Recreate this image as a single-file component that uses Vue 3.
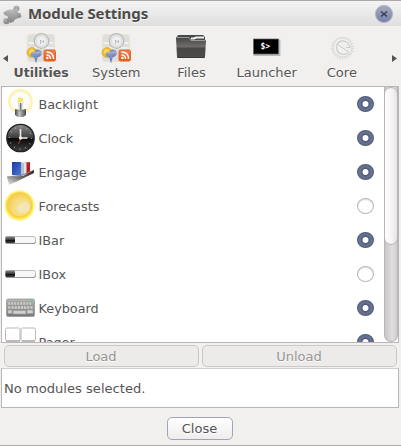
<script setup>
const tabs = [
  { name: 'Utilities', icon: 'utilities', active: true },
  { name: 'System', icon: 'utilities' },
  { name: 'Files', icon: 'files' },
  { name: 'Launcher', icon: 'launcher' },
  { name: 'Core', icon: 'core' },
]
const modules = [
  { name: 'Backlight', icon: 'bulb', on: true },
  { name: 'Clock', icon: 'clock', on: true },
  { name: 'Engage', icon: 'engage', on: true },
  { name: 'Forecasts', icon: 'sun', on: false },
  { name: 'IBar', icon: 'bar', on: true },
  { name: 'IBox', icon: 'bar', on: false },
  { name: 'Keyboard', icon: 'keyboard', on: true },
  { name: 'Pager', icon: 'pager', on: true },
]
const keys = [0, 1, 2, 3, 4, 5, 6, 7]
</script>

<template>
  <div class="window">
    <svg class="defs" width="0" height="0">
      <defs>
        <linearGradient id="puzzle" x1="0" y1="0" x2="0" y2="1"><stop offset="0" stop-color="#bdbdbd" /><stop offset="1" stop-color="#858585" /></linearGradient>
        <linearGradient id="dark" x1="0" y1="0" x2="0" y2="1"><stop offset="0" stop-color="#444" /><stop offset=".45" stop-color="#6d6c6a" /><stop offset=".55" stop-color="#484745" /><stop offset="1" stop-color="#4d4c4a" /></linearGradient>
        <linearGradient id="face" x1="0" y1="0" x2="0" y2="1"><stop offset="0" stop-color="#8b8b8b" /><stop offset=".49" stop-color="#3c3c3c" /><stop offset=".52" stop-color="#090909" /><stop offset="1" stop-color="#424242" /></linearGradient>
        <linearGradient id="metal" x1="0" y1="0" x2="1" y2="0"><stop offset="0" stop-color="#484848" /><stop offset=".4" stop-color="#c5c5c5" /><stop offset="1" stop-color="#464646" /></linearGradient>
        <linearGradient id="orange" x1="0" y1="0" x2="0" y2="1"><stop offset="0" stop-color="#ef8355" /><stop offset="1" stop-color="#e65710" /></linearGradient>
        <linearGradient id="shelf" x1="1" y1="0" x2="0" y2="1"><stop offset="0" stop-color="#222" /><stop offset=".55" stop-color="#777" /><stop offset="1" stop-color="#eee" /></linearGradient>
        <linearGradient id="blue" x1="0" y1="0" x2="1" y2="1"><stop offset="0" stop-color="#183b9f" /><stop offset="1" stop-color="#5279dc" /></linearGradient>
        <linearGradient id="board" x1="0" y1="0" x2="0" y2="1"><stop offset="0" stop-color="#b5b5b3" /><stop offset="1" stop-color="#777775" /></linearGradient>
        <radialGradient id="glow"><stop offset="0" stop-color="#fff" /><stop offset=".68" stop-color="#fbfbf8" /><stop offset=".84" stop-color="#fff09a" /><stop offset="1" stop-color="#fff6c7" stop-opacity="0" /></radialGradient>
        <radialGradient id="halo"><stop offset=".78" stop-color="#ffe62e" /><stop offset=".88" stop-color="#fff06a" /><stop offset="1" stop-color="#fff39a" stop-opacity="0" /></radialGradient>
        <radialGradient id="sunfill" cx=".6" cy=".6" r=".65"><stop offset="0" stop-color="#f5e9ac" /><stop offset=".55" stop-color="#f5dc7c" /><stop offset="1" stop-color="#f8ca48" /></radialGradient>
      </defs>
    </svg>

    <header class="titlebar">
      <svg class="puzzle" width="20" height="20" viewBox="0 0 20 20">
        <g fill="url(#puzzle)">
          <path d="m3 6 5-1.500 5 0 4 4 1.500 4-3.500 1-3 3-4 1.500-2-4-2-2Z" />
          <circle cx="14.500" cy="3.500" r="3" /><circle cx="4.500" cy="16" r="3.200" />
          <path d="m11 6 3-3 3 2-3 5ZM4 14l4-3 3 3-5 4Z" />
          <path d="M1 7.500 6 5l2 3-5 2.500ZM15 8h3.500l1 4-4 1Z" />
        </g>
        <path d="m4 11 2 .5 0 1.500-2 .5ZM12 15.500l2-1.500 2 2-3 1Z" fill="#e7e7e7" />
      </svg>
      <h1>Module Settings</h1>
      <button class="win-close" aria-label="Close window">
        <svg width="18" height="18" viewBox="0 0 18 18"><path d="m6 6.500 6 5m0-5-6 5" stroke="#343d5b" stroke-width="1.500" /></svg>
      </button>
    </header>

    <nav class="tabs">
      <span class="arrow left"></span>
      <div v-for="t in tabs" :key="t.name" class="tab" :class="{ active: t.active }">
        <svg v-if="t.icon === 'utilities'" width="32" height="32" viewBox="0 0 32 32">
          <rect x="2.500" y="3.500" width="27" height="27" rx="3" fill="#dededc" stroke="#e8e3cf" />
          <path d="M3.500 12h25M3.500 17h25" stroke="#f0f0ee" stroke-width="2" />
          <circle cx="16.500" cy="10" r="7.300" fill="#e5e5e5" stroke="#b9b9b9" stroke-width="1.200" />
          <circle cx="16.500" cy="10" r="5.200" fill="#efefef" stroke="#dcdcdc" />
          <path d="m15.500 13 0-4 3 3V9" fill="none" stroke="#b0b0b0" stroke-width=".8" />
          <circle cx="7" cy="21.500" r="5" fill="#f1bd2a" stroke="#d9a536" stroke-width=".7" />
          <circle cx="6.500" cy="20.500" r="2.500" fill="#f8d760" />
          <path d="M5.500 24q0-3 4-3 1-4 5-2 3 1 2 5-2 3-6 2-4 1-5-2Z" fill="#8794ba" />
          <path d="M8 23q1-2 4-1l2-1 2 1" fill="none" stroke="#aeb7d3" stroke-width="1.300" />
          <path d="m9.500 25 1.500 5 1-4 3-2" fill="none" stroke="#6b83cb" stroke-width="1.400" />
          <rect x="19" y="19" width="11.500" height="11" rx="1.500" fill="url(#orange)" stroke="#df692e" />
          <circle cx="22.300" cy="27" r="1.300" fill="#fff" />
          <path d="M21.500 24q4 0 4 4M21.500 21q7 0 7 7" fill="none" stroke="#fff" stroke-width="1.500" />
        </svg>
        <svg v-else-if="t.icon === 'files'" width="32" height="32" viewBox="0 0 32 32">
          <path d="M2 6q0-2 2-2h24l2 2v20H2Z" fill="#484848" />
          <path d="M16 7.500h3l2-1h8" fill="none" stroke="#f0f0f0" stroke-width="2.200" />
          <path d="M1 7q0-1 1-1h12l2 3h14q1 0 1 1l-1 16q0 1-1 1H3q-1 0-1-1Z" fill="url(#dark)" />
          <path d="M2 6.500h12l2 3h14" fill="none" stroke="#999" />
          <path d="M2.500 26.500h27" stroke="#393938" />
        </svg>
        <svg v-else-if="t.icon === 'launcher'" width="32" height="32" viewBox="0 0 32 32">
          <rect x="3.500" y="8.500" width="27" height="16.500" rx="1" fill="#bbb" />
          <rect x="3.500" y="8" width="25" height="15" fill="#020202" stroke="#666" stroke-width=".7" />
          <text x="10.500" y="18" class="prompt">$&gt;</text>
        </svg>
        <svg v-else width="32" height="32" viewBox="0 0 32 32">
          <circle cx="17.500" cy="17" r="10" fill="none" stroke="#d9d9d8" stroke-width="3" stroke-dasharray="1.200 1.300" />
          <circle cx="17.500" cy="16.500" r="9.500" fill="#efefee" stroke="#dadad9" />
          <path d="M24 21.500 12 13.500q3-5 8-3 4 1 5 6H21M12 14q-1 5 2 8 5 3 9 0" fill="none" stroke="#cbcbca" stroke-width="1.200" />
          <path d="m12 14.500 11 7.500" stroke="#fff" stroke-width=".8" />
        </svg>
        <span>{{ t.name }}</span>
      </div>
      <span class="arrow right"></span>
    </nav>

    <section class="list">
      <div class="rows">
        <div v-for="m in modules" :key="m.name" class="row">
          <svg v-if="m.icon === 'bulb'" width="32" height="32" viewBox="0 0 32 32">
            <circle cx="15.500" cy="13.500" r="13.500" fill="url(#glow)" />
            <path d="m13 14 2.500 6 2.500-6-1 7h-3Z" fill="#eee" stroke="#ccc" stroke-width=".5" />
            <path d="M13 9.500h4.500l1 4-3 1-3-1Z" fill="#fae36a" />
            <path d="M14.800 15h1.700v7h-1.700Z" fill="#817b68" />
            <path d="M10 21q5.500 1.500 11 0v6l-3 2h-5l-3-2Z" fill="url(#metal)" />
            <path d="M10 22q6 2 11 0" fill="none" stroke="#777" stroke-width=".6" />
          </svg>
          <svg v-else-if="m.icon === 'clock'" width="32" height="32" viewBox="0 0 32 32">
            <circle cx="15.500" cy="16" r="13.700" fill="url(#face)" stroke="#222" stroke-width="1.300" />
            <circle cx="15.500" cy="16" r="11" fill="none" stroke="#aaa" stroke-width="1.500" stroke-dasharray=".8 4.960" />
            <path d="M15.500 16V7m0 9h7" stroke="#eee" stroke-width="1.600" />
            <path d="m15.500 17-2 5" stroke="#a43535" />
            <circle cx="15.500" cy="16" r="1.700" fill="#eee" />
          </svg>
          <svg v-else-if="m.icon === 'engage'" width="32" height="32" viewBox="0 0 32 32">
            <path d="m2 21 13-1 14-6v3l-10 5-15 7Z" fill="url(#shelf)" />
            <path d="m18 7 7-1v11l-7 3Z" fill="#bd1920" /><path d="m18 7 3.500 0v11l-3.500 2Z" fill="#dee6e5" />
            <path d="m7 6 9 0v14l-9-1Z" fill="url(#blue)" /><path d="m16 6 3 1v13l-3 0Z" fill="#b3c1cc" />
            <path d="m2 21 13-1 14-6" stroke="#888" fill="none" />
          </svg>
          <svg v-else-if="m.icon === 'sun'" width="32" height="32" viewBox="0 0 32 32">
            <circle cx="14.500" cy="15.500" r="16" fill="url(#halo)" />
            <circle cx="14.500" cy="15" r="12" fill="url(#sunfill)" stroke="#f5cd50" stroke-width="1.500" />
            <path d="M12 19q0-4 4-4 2-5 6-3 4 2 3 6-1 4-5 4-7 2-8-3Z" fill="#eeead0" opacity=".55" />
          </svg>
          <svg v-else-if="m.icon === 'bar'" width="32" height="32" viewBox="0 0 32 32">
            <rect x=".5" y="12.500" width="30" height="7" rx="2" fill="#f7f7f7" stroke="#bcbcbc" />
            <path d="M1 19.500h28q1.500 0 1.500-2" stroke="#999" fill="none" />
            <rect x=".5" y="12.500" width="9.500" height="6.500" rx="1" fill="url(#face)" />
          </svg>
          <svg v-else-if="m.icon === 'keyboard'" width="32" height="32" viewBox="0 0 32 32">
            <rect x="1.500" y="7" width="28" height="17.500" rx="1.500" fill="url(#board)" stroke="#999" stroke-width=".8" />
            <g fill="#d0d0ce" stroke="#959595" stroke-width=".5">
              <rect v-for="k in keys" :key="'a' + k" :x="3 + k * 3" y="10" width="2.500" height="3" />
              <rect v-for="k in keys" :key="'b' + k" :x="3 + k * 3.150" y="14" width="2.800" height="3" />
              <rect x="3" y="18" width="4" height="3.500" /><rect x="8" y="18.500" width="13" height="3.500" /><rect x="22" y="18" width="6" height="3.500" />
            </g>
            <rect x="26" y="8.500" width="2" height="1.500" fill="#54df66" />
          </svg>
          <svg v-else width="32" height="32" viewBox="0 0 32 32">
            <rect x=".5" y="2" width="14.500" height="13" rx="1.500" fill="#fff" stroke="#b9b9b9" />
            <rect x="16" y="2" width="14.500" height="13" rx="1.500" fill="#fff" stroke="#b9b9b9" />
            <path d="M1 15h14M17 15h13" stroke="#999" />
          </svg>
          <span class="label">{{ m.name }}</span>
          <i class="radio" :class="{ on: m.on }"></i>
        </div>
      </div>
      <div class="track"><div class="thumb"></div></div>
    </section>

    <div class="actions"><button disabled>Load</button><button disabled>Unload</button></div>
    <section class="message">No modules selected.</section>
    <footer><button class="close">Close</button></footer>
  </div>
</template>

<style>
body { margin: 0; overflow: hidden; }
</style>
<style scoped>
* { box-sizing: border-box; }
.window { width: 401px; height: 446px; display: flex; flex-direction: column; overflow: hidden; background: #f1f0ee; border-top: 1px solid #aaa9a9; border-bottom: 1px solid #a8a8a8; font: 13px/16px "DejaVu Sans", sans-serif; color: #555; }
svg { display: block; flex: none; }
button { font: inherit; color: inherit; padding: 0; margin: 0; }
.titlebar { height: 25px; flex: none; display: flex; align-items: center; padding: 0 8px 0 2px; background: linear-gradient(#f4f4f4, #dedede); }
.puzzle { margin-top: 2px; }
h1 { margin: 0 auto 1px 6px; font: bold 15px/20px "Noto Sans", sans-serif; letter-spacing: -.1px; color: #4d4b49; text-shadow: 0 1px #fff; white-space: nowrap; }
.win-close { width: 18px; height: 18px; margin-top: 1px; border: 1px solid #a5abc3; border-radius: 50%; background: linear-gradient(#a3a9c0, #7983a6); display: flex; align-items: center; justify-content: center; }
.tabs { height: 60px; flex: none; display: flex; padding: 5px 2px 0 3px; }
.tab { width: 75.200px; display: flex; flex-direction: column; align-items: center; flex: none; }
.tab span { height: 20px; line-height: 20px; margin-left: 1px; text-shadow: 0 1px #fff; }
.tab.active span { font-weight: bold; font-size: 12.500px; }
.prompt { font: bold 8px "DejaVu Sans Mono", monospace; fill: #fff; }
.arrow { width: 5px; height: 7px; margin-top: 24px; flex: none; background: #555; }
.left { clip-path: polygon(100% 0, 100% 100%, 0 50%); margin-right: -5px; }
.right { clip-path: polygon(0 0, 0 100%, 100% 50%); margin-left: auto; margin-right: 2px; }
.list { margin: 0 2px 0 1px; height: 257px; flex: none; display: flex; overflow: hidden; background: #fff; border: 1px solid #bbb5b5; }
.rows { flex: 1; min-width: 0; }
.row { height: 34px; display: flex; align-items: center; padding: 0 10px 0 3px; }
.label { flex: 1; margin-left: 1.500px; padding-top: 2px; font-size: 12.800px; }
.radio { width: 17px; height: 16px; border-radius: 50%; background: #fff; border: 1px solid #b8b8b8; box-shadow: inset 0 1px 1px #ddd; }
.radio.on { border-color: #525a77; background: radial-gradient(circle, #fff 0 2.500px, #4e5878 3.500px, #67708f 5px, #7480a1 7px); box-shadow: inset 0 0 2px #414a68; }
.track { width: 14px; flex: none; background: linear-gradient(90deg, #c8c6c8, #e0dfe0 60%, #d0ced0); border: 1px solid #bab7b9; border-top: 0; border-radius: 0 0 7px 7px; }
.thumb { width: 14px; height: 158px; margin-left: -1px; border: 1px solid #b7b4b5; border-radius: 7px; background: linear-gradient(90deg, #fff, #f4f2f4 60%, #e7e4e6); }
.actions { display: grid; grid-template-columns: 1fr 1fr; gap: 3px; padding: 2px 4px 0; height: 25px; flex: none; }
.actions button { height: 22px; padding: 1px 1px 0 0; border: 1px solid #cbc8c9; border-radius: 5px; background: #edebea; color: #969491; text-shadow: 0 1px #fff; }
.message { height: 40px; margin: 0 2px 0 1px; flex: none; border: 1px solid #bbb5b5; border-top-color: #d0cece; background: #fff; line-height: 39px; padding-left: 2px; font-size: 13.100px; }
footer { flex: 1; display: flex; justify-content: center; align-items: flex-start; padding: 9px 2px 0 0; }
.close { width: 66px; height: 23px; border: 1px solid #a4a4b9; border-radius: 5px; background: linear-gradient(#fff, #eeeded); text-shadow: 0 1px #fff; }
</style>
